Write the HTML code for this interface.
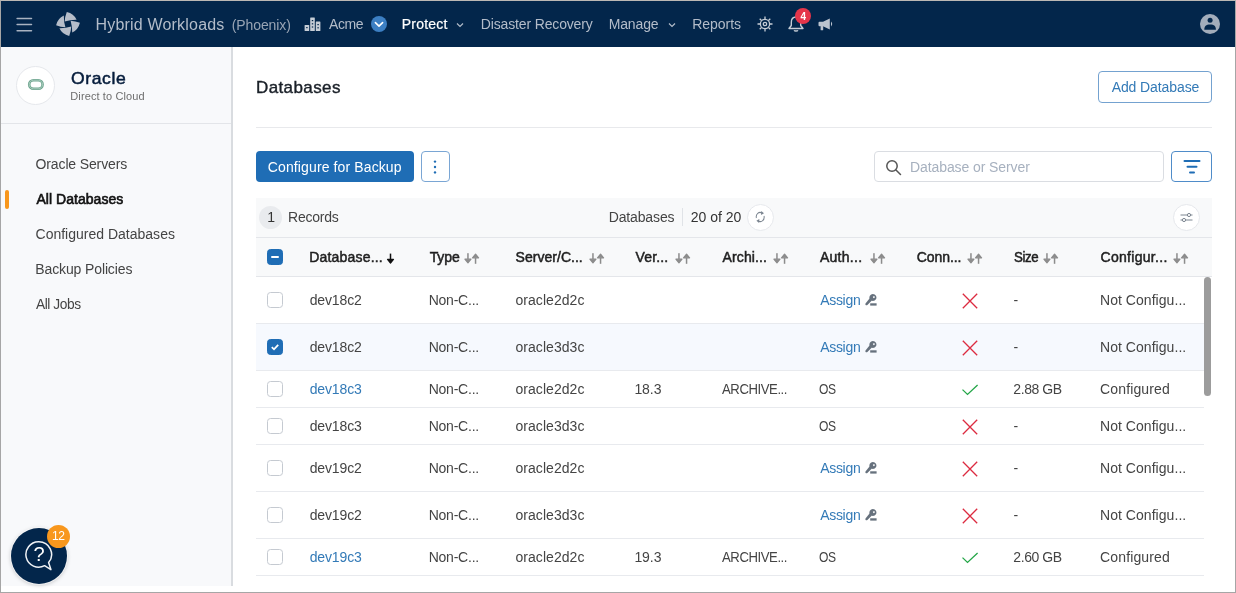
<!DOCTYPE html>
<html lang="en">
<head>
<meta charset="utf-8">
<title>Oracle Databases - Hybrid Workloads</title>
<style>
*{box-sizing:border-box;margin:0;padding:0}
html,body{width:1236px;height:593px;overflow:hidden;background:#fff}
body{font-family:"Liberation Sans",sans-serif;font-size:14px;color:#444;position:relative}
#root{position:absolute;left:0;top:0;width:1236px;height:593px;will-change:transform;transform:translateZ(0)}
.abs{position:absolute}
.t{position:absolute;white-space:nowrap;line-height:20px;height:20px}
#frame{position:absolute;left:0;top:0;width:1236px;height:593px;border:1px solid #a6a6a6;border-top-color:#bcb8b4;z-index:50;pointer-events:none}
#nav{position:absolute;left:1px;top:1px;width:1234px;height:46px;background:#03264b}
.n{color:#b3bcc9}
#side{position:absolute;left:1px;top:47px;width:232px;height:539px;background:#f8f9fb;border-right:2px solid #d9dce0}
.btn{position:absolute;border-radius:4px;height:31px}
.hline{position:absolute;height:1px;background:#e4e6ea}
.row{position:absolute;left:256px;width:948px;border-bottom:1px solid #e8eaee}
.cb{position:absolute;left:267px;width:16px;height:16px;border:1px solid #c5cad1;border-radius:3.5px;background:#fff}
.cb.on{background:#1f6db5;border-color:#1f6db5}
.th{color:#1f1f1f}
.lnk{color:#337ab7}
</style>
</head>
<body>
<div id="root">

<div id="nav"></div>
<svg class="abs" style="left:16px;top:17px" width="17" height="15" viewBox="0 0 17 15"><g stroke="#a9b3c1" stroke-width="1.5" stroke-linecap="round"><path d="M1.1 1.5h14.4M1.1 7.6h14.4M1.1 13.7h14.4"/></g></svg>
<svg class="abs" style="left:56px;top:12px" width="24" height="24" viewBox="-12 -12 24 24"><g fill="#b6bdc9"><path d="M-1.2 -11.9 Q5.8 -10.3 8.6 -4.2 Q2.5 -4.3 -3.3 -2.6 Q-3.0 -7.5 -1.2 -11.9Z" transform="rotate(0)"/><path d="M-1.2 -11.9 Q5.8 -10.3 8.6 -4.2 Q2.5 -4.3 -3.3 -2.6 Q-3.0 -7.5 -1.2 -11.9Z" transform="rotate(90)"/><path d="M-1.2 -11.9 Q5.8 -10.3 8.6 -4.2 Q2.5 -4.3 -3.3 -2.6 Q-3.0 -7.5 -1.2 -11.9Z" transform="rotate(180)"/><path d="M-1.2 -11.9 Q5.8 -10.3 8.6 -4.2 Q2.5 -4.3 -3.3 -2.6 Q-3.0 -7.5 -1.2 -11.9Z" transform="rotate(270)"/></g></svg>
<div class="t n" style="left:95.44px;top:15.0px;letter-spacing:0.196px;font-size:16px">Hybrid Workloads</div>
<div class="t n" style="left:231.70px;top:14.8px;letter-spacing:-0.091px;font-size:14px;color:#98a4b4">(Phoenix)</div>
<svg class="abs" style="left:304px;top:17px" width="17" height="14" viewBox="0 0 17 14"><g fill="#c6cdd6"><rect x="0.6" y="8" width="4.6" height="6" rx="0.5"/><rect x="6.2" y="0.5" width="4.6" height="13.5" rx="0.5"/><rect x="11.8" y="4.5" width="4.6" height="9.5" rx="0.5"/></g><g fill="#03264b"><rect x="2.2" y="10" width="1.4" height="1.2"/><rect x="7.8" y="3" width="1.4" height="1.2"/><rect x="7.8" y="6.2" width="1.4" height="1.2"/><rect x="7.8" y="9.4" width="1.4" height="1.2"/><rect x="13.4" y="7" width="1.4" height="1.2"/><rect x="13.4" y="10.2" width="1.4" height="1.2"/></g></svg>
<div class="t n" style="left:329.08px;top:13.8px;letter-spacing:-0.404px;">Acme</div>
<svg class="abs" style="left:371px;top:16px" width="16" height="16" viewBox="0 0 16 16"><circle cx="8" cy="8" r="8" fill="#3c7fc3"/><path d="M4.4 6.6 L8 10.1 L11.6 6.6" fill="none" stroke="#fff" stroke-width="1.6" stroke-linecap="round" stroke-linejoin="round"/></svg>
<div class="t n" style="left:401.84px;top:13.8px;letter-spacing:0.196px;color:#fff;-webkit-text-stroke:0.2px currentColor">Protect</div>
<svg class="abs" style="left:456px;top:22px" width="8" height="6" viewBox="0 0 8 6"><path d="M1 1.5 L4 4.5 L7 1.5" fill="none" stroke="#b3bcc9" stroke-width="1.2"/></svg>
<div class="t n" style="left:480.78px;top:13.8px;letter-spacing:-0.147px;">Disaster Recovery</div>
<div class="t n" style="left:608.68px;top:13.8px;letter-spacing:-0.126px;">Manage</div>
<svg class="abs" style="left:667.5px;top:22px" width="8" height="6" viewBox="0 0 8 6"><path d="M1 1.5 L4 4.5 L7 1.5" fill="none" stroke="#b3bcc9" stroke-width="1.2"/></svg>
<div class="t n" style="left:692.18px;top:13.8px;letter-spacing:-0.029px;">Reports</div>
<svg class="abs" style="left:757px;top:16px" width="16" height="16" viewBox="0 0 16 16"><g fill="none" stroke="#c6cdd6" stroke-width="1.3"><circle cx="8" cy="8" r="4.6"/><circle cx="8" cy="8" r="1.7"/><path d="M8 0.5v2.5M8 13v2.5M0.5 8h2.5M13 8h2.5M2.7 2.7l1.8 1.8M11.5 11.5l1.8 1.8M2.7 13.3l1.8-1.8M11.5 4.500l1.8-1.8"/></g></svg>
<svg class="abs" style="left:787px;top:15px" width="18" height="18" viewBox="0 0 18 18"><g fill="none" stroke="#c6cdd6" stroke-width="1.4" stroke-linejoin="round"><path d="M9 2 C5.8 2 4.3 4.4 4.3 7.3 V10.5 L2 13.5 H16 L13.7 10.5 V7.3 C13.7 4.4 12.2 2 9 2Z"/><path d="M7.2 15.2 C7.6 16.3 10.4 16.3 10.8 15.2"/></g></svg>
<div class="abs" style="left:795px;top:8px;width:16px;height:16px;border-radius:8px;background:#e5354a"></div>
<div class="t" style="left:800.58px;top:6.5px;font-size:10px;font-weight:bold;color:#fff">4</div>
<svg class="abs" style="left:818px;top:18px" width="16" height="13" viewBox="0 0 16 13"><g fill="#bcc4cf"><path d="M0.5 4.8 Q0.5 3.8 1.5 3.8 H5 L11.8 0.6 V11.4 L5 8.3 H1.5 Q0.5 8.3 0.5 7.300Z"/><rect x="2.6" y="8" width="2.6" height="4.300" rx="0.6"/><path d="M13 3.6 Q15.4 6 13 8.4Z"/></g></svg>
<svg class="abs" style="left:1200px;top:14px" width="20" height="20" viewBox="0 0 20 20"><circle cx="10" cy="10" r="10" fill="#a3adbb"/><circle cx="10.1" cy="6.2" r="2.5" fill="#03264b"/><path d="M4.3 15.8 C4.3 12 6 10.4 10.1 10.4 C14.2 10.4 15.9 12 15.9 15.8 Z" fill="#03264b"/></svg>
<div id="side"></div>
<div class="hline" style="left:1px;top:123px;width:230px;background:#e3e5e9"></div>
<div class="abs" style="left:16px;top:65.5px;width:39px;height:39px;border-radius:20px;background:#fff;border:1px solid #e6e8ec"></div>
<svg class="abs" style="left:27px;top:78px" width="18" height="13" viewBox="0 0 18 13"><rect x="2.2" y="2.2" width="13.4" height="8.6" rx="4.3" fill="#fff" stroke="#6ea58f" stroke-width="2.6"/><rect x="2.2" y="2.2" width="13.4" height="8.6" rx="4.3" fill="none" stroke="#c0dbd0" stroke-width="0.7"/></svg>
<div class="t" style="left:70.61px;top:68.9px;letter-spacing:0.600px;transform:scaleX(1.0322);transform-origin:0 50%;font-size:17px;color:#061d3c;-webkit-text-stroke:0.5px currentColor">Oracle</div>
<div class="t" style="left:70.32px;top:86.4px;letter-spacing:0.111px;font-size:11px;color:#6e6e6e">Direct to Cloud</div>
<div class="t" style="left:35.60px;top:154.0px;letter-spacing:-0.136px;">Oracle Servers</div>
<div class="abs" style="left:5px;top:190px;width:4px;height:19px;border-radius:2px;background:#f8971d"></div>
<div class="t" style="left:36.45px;top:188.7px;letter-spacing:0.036px;color:#111;-webkit-text-stroke:0.6px currentColor">All Databases</div>
<div class="t" style="left:35.53px;top:224.2px;letter-spacing:0.005px;">Configured Databases</div>
<div class="t" style="left:35.28px;top:259.0px;letter-spacing:-0.121px;">Backup Policies</div>
<div class="t" style="left:36.08px;top:293.6px;letter-spacing:-0.450px;transform:scaleX(0.9818);transform-origin:0 50%;">All Jobs</div>
<div class="t" style="left:255.96px;top:77.9px;letter-spacing:0.403px;font-size:17px;color:#1a2028;-webkit-text-stroke:0.4px currentColor">Databases</div>
<div class="btn" style="left:1098px;top:71px;width:114px;height:32px;border:1px solid #74a2d0;background:#fff"></div>
<div class="t lnk" style="left:1111.68px;top:77px;letter-spacing:-0.092px;">Add Database</div>
<div class="hline" style="left:256px;top:127px;width:956px;background:#e8e9ec"></div>
<div class="btn" style="left:256px;top:151px;width:158px;background:#1f6db5"></div>
<div class="t" style="left:267.83px;top:157px;letter-spacing:0.116px;color:#fff">Configure for Backup</div>
<div class="btn" style="left:421px;top:151px;width:29px;border:1px solid #7aa6d4;background:#fff"></div>
<svg class="abs" style="left:433px;top:158.7px" width="4" height="16" viewBox="0 0 4 16"><g fill="#1f6db5"><circle cx="2" cy="2.6" r="1.2"/><circle cx="2" cy="8" r="1.2"/><circle cx="2" cy="13.4" r="1.2"/></g></svg>
<div class="btn" style="left:874px;top:151px;width:290px;border:1px solid #dadde2;background:#fff"></div>
<svg class="abs" style="left:885px;top:159px" width="17" height="17" viewBox="0 0 17 17"><g fill="none" stroke="#555" stroke-width="1.5" stroke-linecap="round"><circle cx="7" cy="7" r="5.2"/><path d="M11 11 L15.5 15.5"/></g></svg>
<div class="t" style="left:909.98px;top:157px;letter-spacing:-0.087px;color:#a7b1bf">Database or Server</div>
<div class="btn" style="left:1171px;top:151px;width:41px;border:1px solid #4f8cc9;background:#fff"></div>
<svg class="abs" style="left:1183px;top:159px" width="18" height="15" viewBox="0 0 18 15"><g stroke="#1f6db5" stroke-width="2" stroke-linecap="round"><path d="M1.5 2 H16.5"/><path d="M4.5 7.8 H13.5"/><path d="M7 13.5 H11"/></g></svg>
<div class="abs" style="left:256px;top:198px;width:956px;height:79px;background:#f8f9fa"></div>
<div class="hline" style="left:256px;top:237px;width:956px"></div>
<div class="hline" style="left:256px;top:276px;width:956px"></div>
<div class="abs" style="left:259px;top:206px;width:23px;height:23px;border-radius:12px;background:#e9ebee"></div>
<div class="t" style="left:267.31px;top:207px;color:#333">1</div>
<div class="t" style="left:288.08px;top:207px;letter-spacing:-0.242px;">Records</div>
<div class="t" style="left:608.68px;top:207px;letter-spacing:-0.134px;">Databases</div>
<div class="abs" style="left:682px;top:208px;width:1px;height:18px;background:#e0e3e7"></div>
<div class="t" style="left:690.77px;top:207px;letter-spacing:-0.024px;color:#333">20 of 20</div>
<div class="abs" style="left:747px;top:204px;width:27px;height:27px;border-radius:14px;background:#fff;border:1px solid #e6e8ec"></div>
<svg class="abs" style="left:755.4px;top:211.3px" width="10.4" height="12" viewBox="0 0 12 12" preserveAspectRatio="none"><g fill="none" stroke="#7a848f" stroke-width="1.15"><path d="M1.6 7 A4.4 4.4 0 0 1 8 2"/><path d="M10.4 5 A4.4 4.4 0 0 1 4 10"/></g><path d="M7.2 0 L10.4 2.2 L7 4Z" fill="#7a848f"/><path d="M4.8 12 L1.6 9.8 L5 8Z" fill="#7a848f"/></svg>
<div class="abs" style="left:1173px;top:204px;width:27px;height:27px;border-radius:14px;background:#fff;border:1px solid #e6e8ec"></div>
<svg class="abs" style="left:1180px;top:212px" width="13" height="11" viewBox="0 0 13 11"><g fill="none" stroke="#7d8691" stroke-width="1"><path d="M0.5 3 H7.5 M10.5 3 H12.5"/><circle cx="9" cy="3" r="1.6"/><path d="M0.5 8 H2.5 M5.500 8 H12.5"/><circle cx="4" cy="8" r="1.6"/></g></svg>
<div class="cb on" style="top:249px"></div>
<div class="abs" style="left:271px;top:256px;width:8px;height:2px;background:#fff;border-radius:1px"></div>
<div class="t th" style="left:309.25px;top:247px;letter-spacing:0.185px;-webkit-text-stroke:0.5px currentColor">Database...</div>
<div class="t th" style="left:429.72px;top:247px;letter-spacing:-0.132px;-webkit-text-stroke:0.5px currentColor">Type</div>
<svg class="abs" style="left:463.8px;top:252px" width="16" height="13" viewBox="0 0 16 13"><g fill="#8c8c8c" stroke="#8c8c8c" stroke-width="1.2" stroke-linejoin="round"><path d="M0.9 7.2 H7 L3.95 10.9Z"/><path d="M8.5 5.8 H14.6 L11.55 2.100Z"/></g><g fill="#8c8c8c"><rect x="3.2" y="1.2" width="1.5" height="6"/><rect x="10.8" y="5.8" width="1.5" height="6"/></g></svg>
<div class="t th" style="left:515.58px;top:247px;letter-spacing:0.026px;-webkit-text-stroke:0.5px currentColor">Server/C...</div>
<svg class="abs" style="left:588.5px;top:252px" width="16" height="13" viewBox="0 0 16 13"><g fill="#8c8c8c" stroke="#8c8c8c" stroke-width="1.2" stroke-linejoin="round"><path d="M0.9 7.2 H7 L3.95 10.9Z"/><path d="M8.5 5.8 H14.6 L11.55 2.100Z"/></g><g fill="#8c8c8c"><rect x="3.2" y="1.2" width="1.5" height="6"/><rect x="10.8" y="5.8" width="1.5" height="6"/></g></svg>
<div class="t th" style="left:635.49px;top:247px;letter-spacing:0.169px;-webkit-text-stroke:0.5px currentColor">Ver...</div>
<svg class="abs" style="left:675.2px;top:252px" width="16" height="13" viewBox="0 0 16 13"><g fill="#8c8c8c" stroke="#8c8c8c" stroke-width="1.2" stroke-linejoin="round"><path d="M0.9 7.2 H7 L3.95 10.9Z"/><path d="M8.5 5.8 H14.6 L11.55 2.100Z"/></g><g fill="#8c8c8c"><rect x="3.2" y="1.2" width="1.5" height="6"/><rect x="10.8" y="5.8" width="1.5" height="6"/></g></svg>
<div class="t th" style="left:722.50px;top:247px;letter-spacing:0.128px;-webkit-text-stroke:0.5px currentColor">Archi...</div>
<svg class="abs" style="left:773.0px;top:252px" width="16" height="13" viewBox="0 0 16 13"><g fill="#8c8c8c" stroke="#8c8c8c" stroke-width="1.2" stroke-linejoin="round"><path d="M0.9 7.2 H7 L3.95 10.9Z"/><path d="M8.5 5.8 H14.6 L11.55 2.100Z"/></g><g fill="#8c8c8c"><rect x="3.2" y="1.2" width="1.5" height="6"/><rect x="10.8" y="5.8" width="1.5" height="6"/></g></svg>
<div class="t th" style="left:819.90px;top:247px;letter-spacing:0.292px;-webkit-text-stroke:0.5px currentColor">Auth...</div>
<svg class="abs" style="left:870.0px;top:252px" width="16" height="13" viewBox="0 0 16 13"><g fill="#8c8c8c" stroke="#8c8c8c" stroke-width="1.2" stroke-linejoin="round"><path d="M0.9 7.2 H7 L3.95 10.9Z"/><path d="M8.5 5.8 H14.6 L11.55 2.100Z"/></g><g fill="#8c8c8c"><rect x="3.2" y="1.2" width="1.5" height="6"/><rect x="10.8" y="5.8" width="1.5" height="6"/></g></svg>
<div class="t th" style="left:916.63px;top:247px;letter-spacing:-0.050px;-webkit-text-stroke:0.5px currentColor">Conn...</div>
<svg class="abs" style="left:967.0px;top:252px" width="16" height="13" viewBox="0 0 16 13"><g fill="#8c8c8c" stroke="#8c8c8c" stroke-width="1.2" stroke-linejoin="round"><path d="M0.9 7.2 H7 L3.95 10.9Z"/><path d="M8.5 5.8 H14.6 L11.55 2.100Z"/></g><g fill="#8c8c8c"><rect x="3.2" y="1.2" width="1.5" height="6"/><rect x="10.8" y="5.8" width="1.5" height="6"/></g></svg>
<div class="t th" style="left:1013.50px;top:247px;letter-spacing:-0.450px;transform:scaleX(0.9487);transform-origin:0 50%;-webkit-text-stroke:0.5px currentColor">Size</div>
<svg class="abs" style="left:1043.0px;top:252px" width="16" height="13" viewBox="0 0 16 13"><g fill="#8c8c8c" stroke="#8c8c8c" stroke-width="1.2" stroke-linejoin="round"><path d="M0.9 7.2 H7 L3.95 10.9Z"/><path d="M8.5 5.8 H14.6 L11.55 2.100Z"/></g><g fill="#8c8c8c"><rect x="3.2" y="1.2" width="1.5" height="6"/><rect x="10.8" y="5.8" width="1.5" height="6"/></g></svg>
<div class="t th" style="left:1100.53px;top:247px;letter-spacing:0.300px;-webkit-text-stroke:0.5px currentColor">Configur...</div>
<svg class="abs" style="left:1173.0px;top:252px" width="16" height="13" viewBox="0 0 16 13"><g fill="#8c8c8c" stroke="#8c8c8c" stroke-width="1.2" stroke-linejoin="round"><path d="M0.9 7.2 H7 L3.95 10.9Z"/><path d="M8.5 5.8 H14.6 L11.55 2.100Z"/></g><g fill="#8c8c8c"><rect x="3.2" y="1.2" width="1.5" height="6"/><rect x="10.8" y="5.8" width="1.5" height="6"/></g></svg>
<svg class="abs" style="left:386px;top:252px" width="9" height="13" viewBox="0 0 9 13"><g fill="#111" stroke="#111" stroke-width="1.2" stroke-linejoin="round"><path d="M1.5 7.4 H7.5 L4.5 11Z"/></g><g fill="#111"><rect x="3.75" y="1.600" width="1.5" height="6"/></g></svg>
<div class="row" style="top:277px;height:47px"></div>
<div class="cb" style="top:292px"></div>
<div class="t" style="left:309.64px;top:290px;letter-spacing:-0.115px;">dev18c2</div>
<div class="t" style="left:428.68px;top:290px;letter-spacing:-0.231px;">Non-C...</div>
<div class="t" style="left:515.48px;top:290px;letter-spacing:0.055px;">oracle2d2c</div>
<div class="t lnk" style="left:820.18px;top:290px;letter-spacing:-0.303px;">Assign</div>
<svg class="abs" style="left:865px;top:294.0px" width="13" height="13" viewBox="0 0 13 13"><g fill="#66717d"><path d="M7.9 0 a3.5 3.5 0 1 0 0.01 0Z M8.9 2.2 a0.9 0.9 0 1 1 -0.01 0Z" fill-rule="evenodd"/><path d="M4.7 4.3 L6.9 6.5 L2.4 11 Q1.3 11.6 0.6 10.9 Q0 10.100 0.700 9.200Z"/><rect x="5.2" y="9.3" width="6.4" height="2.3"/></g></svg>
<svg class="abs" style="left:962px;top:292.8px" width="16" height="16" viewBox="0 0 16 16"><path d="M0.8 0.8 L15.2 15.2 M15.2 0.8 L0.8 15.2" fill="none" stroke="#dc2b40" stroke-width="1.3"/></svg>
<div class="t" style="left:1013.54px;top:290px;">-</div>
<div class="t" style="left:1099.98px;top:290px;letter-spacing:0.049px;">Not Configu...</div>
<div class="row" style="top:324px;height:47px;background:#f6f9fe"></div>
<div class="cb on" style="top:339px"></div>
<svg class="abs" style="left:270px;top:342px" width="10" height="10" viewBox="0 0 10 10"><path d="M1.8 5.2 L4 7.3 L8.2 2.8" fill="none" stroke="#fff" stroke-width="1.8"/></svg>
<div class="t" style="left:309.64px;top:337px;letter-spacing:-0.115px;">dev18c2</div>
<div class="t" style="left:428.68px;top:337px;letter-spacing:-0.231px;">Non-C...</div>
<div class="t" style="left:515.48px;top:337px;letter-spacing:0.055px;">oracle3d3c</div>
<div class="t lnk" style="left:820.18px;top:337px;letter-spacing:-0.303px;">Assign</div>
<svg class="abs" style="left:865px;top:341.0px" width="13" height="13" viewBox="0 0 13 13"><g fill="#66717d"><path d="M7.9 0 a3.5 3.5 0 1 0 0.01 0Z M8.9 2.2 a0.9 0.9 0 1 1 -0.01 0Z" fill-rule="evenodd"/><path d="M4.7 4.3 L6.9 6.5 L2.4 11 Q1.3 11.6 0.6 10.9 Q0 10.100 0.700 9.200Z"/><rect x="5.2" y="9.3" width="6.4" height="2.3"/></g></svg>
<svg class="abs" style="left:962px;top:339.8px" width="16" height="16" viewBox="0 0 16 16"><path d="M0.8 0.8 L15.2 15.2 M15.2 0.8 L0.8 15.2" fill="none" stroke="#dc2b40" stroke-width="1.3"/></svg>
<div class="t" style="left:1013.54px;top:337px;">-</div>
<div class="t" style="left:1099.98px;top:337px;letter-spacing:0.049px;">Not Configu...</div>
<div class="row" style="top:371px;height:37px"></div>
<div class="cb" style="top:381px"></div>
<div class="t lnk" style="left:309.64px;top:379px;letter-spacing:-0.122px;">dev18c3</div>
<div class="t" style="left:428.68px;top:379px;letter-spacing:-0.231px;">Non-C...</div>
<div class="t" style="left:515.48px;top:379px;letter-spacing:0.055px;">oracle2d2c</div>
<div class="t" style="left:634.41px;top:379px;letter-spacing:-0.068px;">18.3</div>
<div class="t" style="left:721.99px;top:379px;letter-spacing:-0.450px;transform:scaleX(0.9374);transform-origin:0 50%;">ARCHIVE...</div>
<div class="t" style="left:819.38px;top:379px;letter-spacing:-0.450px;transform:scaleX(0.8631);transform-origin:0 50%;">OS</div>
<svg class="abs" style="left:961px;top:384.3px" width="18" height="12" viewBox="0 0 18 12"><path d="M1.5 5.6 L6.5 10.4 L16.6 1" fill="none" stroke="#24a648" stroke-width="1.3"/></svg>
<div class="t" style="left:1013.37px;top:379px;letter-spacing:-0.450px;">2.88 GB</div>
<div class="t" style="left:1100.03px;top:379px;letter-spacing:0.145px;">Configured</div>
<div class="row" style="top:408px;height:37px"></div>
<div class="cb" style="top:418px"></div>
<div class="t" style="left:309.64px;top:416px;letter-spacing:-0.122px;">dev18c3</div>
<div class="t" style="left:428.68px;top:416px;letter-spacing:-0.231px;">Non-C...</div>
<div class="t" style="left:515.48px;top:416px;letter-spacing:0.055px;">oracle3d3c</div>
<div class="t" style="left:819.38px;top:416px;letter-spacing:-0.450px;transform:scaleX(0.8631);transform-origin:0 50%;">OS</div>
<svg class="abs" style="left:962px;top:418.8px" width="16" height="16" viewBox="0 0 16 16"><path d="M0.8 0.8 L15.2 15.2 M15.2 0.8 L0.8 15.2" fill="none" stroke="#dc2b40" stroke-width="1.3"/></svg>
<div class="t" style="left:1013.54px;top:416px;">-</div>
<div class="t" style="left:1099.98px;top:416px;letter-spacing:0.049px;">Not Configu...</div>
<div class="row" style="top:445px;height:47px"></div>
<div class="cb" style="top:460px"></div>
<div class="t" style="left:309.64px;top:458px;letter-spacing:-0.115px;">dev19c2</div>
<div class="t" style="left:428.68px;top:458px;letter-spacing:-0.231px;">Non-C...</div>
<div class="t" style="left:515.48px;top:458px;letter-spacing:0.055px;">oracle2d2c</div>
<div class="t lnk" style="left:820.18px;top:458px;letter-spacing:-0.303px;">Assign</div>
<svg class="abs" style="left:865px;top:462.0px" width="13" height="13" viewBox="0 0 13 13"><g fill="#66717d"><path d="M7.9 0 a3.5 3.5 0 1 0 0.01 0Z M8.9 2.2 a0.9 0.9 0 1 1 -0.01 0Z" fill-rule="evenodd"/><path d="M4.7 4.3 L6.9 6.5 L2.4 11 Q1.3 11.6 0.6 10.9 Q0 10.100 0.700 9.200Z"/><rect x="5.2" y="9.3" width="6.4" height="2.3"/></g></svg>
<svg class="abs" style="left:962px;top:460.8px" width="16" height="16" viewBox="0 0 16 16"><path d="M0.8 0.8 L15.2 15.2 M15.2 0.8 L0.8 15.2" fill="none" stroke="#dc2b40" stroke-width="1.3"/></svg>
<div class="t" style="left:1013.54px;top:458px;">-</div>
<div class="t" style="left:1099.98px;top:458px;letter-spacing:0.049px;">Not Configu...</div>
<div class="row" style="top:492px;height:47px"></div>
<div class="cb" style="top:507px"></div>
<div class="t" style="left:309.64px;top:505px;letter-spacing:-0.115px;">dev19c2</div>
<div class="t" style="left:428.68px;top:505px;letter-spacing:-0.231px;">Non-C...</div>
<div class="t" style="left:515.48px;top:505px;letter-spacing:0.055px;">oracle3d3c</div>
<div class="t lnk" style="left:820.18px;top:505px;letter-spacing:-0.303px;">Assign</div>
<svg class="abs" style="left:865px;top:509.0px" width="13" height="13" viewBox="0 0 13 13"><g fill="#66717d"><path d="M7.9 0 a3.5 3.5 0 1 0 0.01 0Z M8.9 2.2 a0.9 0.9 0 1 1 -0.01 0Z" fill-rule="evenodd"/><path d="M4.7 4.3 L6.9 6.5 L2.4 11 Q1.3 11.6 0.6 10.9 Q0 10.100 0.700 9.200Z"/><rect x="5.2" y="9.3" width="6.4" height="2.3"/></g></svg>
<svg class="abs" style="left:962px;top:507.79999999999995px" width="16" height="16" viewBox="0 0 16 16"><path d="M0.8 0.8 L15.2 15.2 M15.2 0.8 L0.8 15.2" fill="none" stroke="#dc2b40" stroke-width="1.3"/></svg>
<div class="t" style="left:1013.54px;top:505px;">-</div>
<div class="t" style="left:1099.98px;top:505px;letter-spacing:0.049px;">Not Configu...</div>
<div class="row" style="top:539px;height:37px"></div>
<div class="cb" style="top:549px"></div>
<div class="t lnk" style="left:309.64px;top:547px;letter-spacing:-0.122px;">dev19c3</div>
<div class="t" style="left:428.68px;top:547px;letter-spacing:-0.231px;">Non-C...</div>
<div class="t" style="left:515.48px;top:547px;letter-spacing:0.055px;">oracle2d2c</div>
<div class="t" style="left:634.41px;top:547px;letter-spacing:-0.068px;">19.3</div>
<div class="t" style="left:721.99px;top:547px;letter-spacing:-0.450px;transform:scaleX(0.9374);transform-origin:0 50%;">ARCHIVE...</div>
<div class="t" style="left:819.38px;top:547px;letter-spacing:-0.450px;transform:scaleX(0.8631);transform-origin:0 50%;">OS</div>
<svg class="abs" style="left:961px;top:552.3px" width="18" height="12" viewBox="0 0 18 12"><path d="M1.5 5.6 L6.5 10.4 L16.6 1" fill="none" stroke="#24a648" stroke-width="1.3"/></svg>
<div class="t" style="left:1013.37px;top:547px;letter-spacing:-0.450px;">2.60 GB</div>
<div class="t" style="left:1100.03px;top:547px;letter-spacing:0.145px;">Configured</div>
<div class="abs" style="left:1204px;top:277px;width:7px;height:119px;border-radius:3.5px;background:#9c9c9c"></div>
<div class="abs" style="left:11px;top:528px;width:56px;height:56px;border-radius:28px;background:#03264b;box-shadow:0 0 0 1px rgba(255,255,255,0.6),0 1px 4px rgba(0,0,0,0.25)"></div>
<svg class="abs" style="left:24px;top:540px" width="30" height="32" viewBox="0 0 30 32"><path d="M14.5 1.8 A12.7 12.7 0 1 0 20.6 25.7 L26.9 29.6 L24.6 22.6 A12.7 12.7 0 0 0 14.5 1.8Z" fill="none" stroke="#f1f3f6" stroke-width="1.5" stroke-linejoin="round"/></svg>
<div class="t" style="left:33.49px;top:544px;font-size:20px;color:#fff">?</div>
<div class="abs" style="left:46.500px;top:524.5px;width:23px;height:23px;border-radius:12px;background:#f8971d"></div>
<div class="t" style="left:52.11px;top:526px;letter-spacing:-0.450px;transform:scaleX(0.9275);transform-origin:0 50%;font-size:13px;color:#fff">12</div>
<div id="frame"></div>
</div>
</body>
</html>
